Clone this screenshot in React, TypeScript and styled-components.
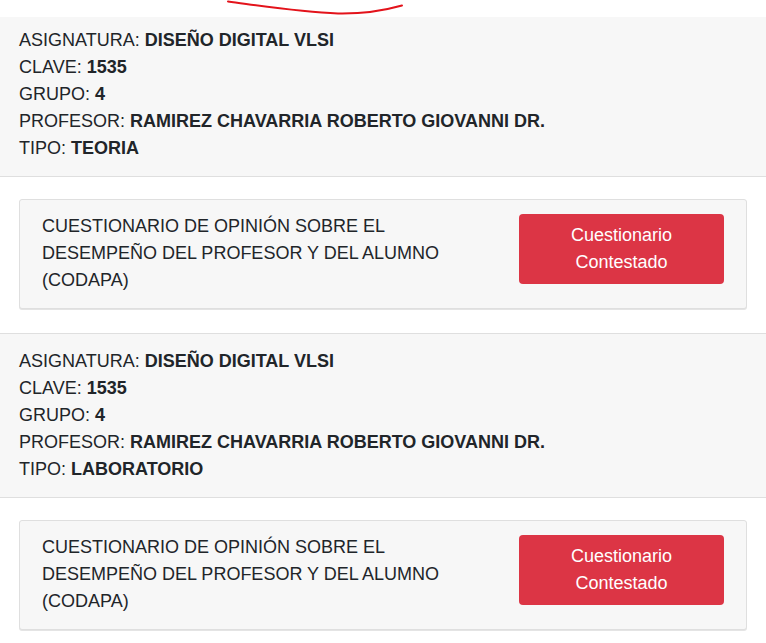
import React from "react";
import styled, { createGlobalStyle } from "styled-components";

const GlobalStyle = createGlobalStyle`
  html, body {
    margin: 0;
    padding: 0;
    background: #ffffff;
  }
  body {
    font-family: "Liberation Sans", Arial, sans-serif;
    color: #212529;
    font-size: 18px;
    line-height: 27px;
  }
`;

const Page = styled.div`
  position: relative;
  padding-top: 17px;
  width: 766px;
`;

const Annotation = styled.svg`
  position: absolute;
  left: 0;
  top: 0;
  pointer-events: none;
`;

const Section = styled.section`
  display: flex;
  flex-direction: column;
`;

const Header = styled.div<{ $first?: boolean }>`
  background: #f7f7f7;
  border-top: ${(p) => (p.$first ? "none" : "1px solid #dfdfdf")};
  border-bottom: 1px solid #dfdfdf;
  padding: ${(p) => (p.$first ? "10px" : "14px")} 19px 14px;
  display: flex;
  flex-direction: column;
`;

const InfoLine = styled.div`
  font-size: 18px;
  line-height: 27px;
  white-space: nowrap;
`;

const Value = styled.b`
  font-weight: 700;
`;

const Body = styled.div`
  padding: 22px 19px 24px;
`;

const Card = styled.div`
  display: flex;
  align-items: flex-start;
  justify-content: space-between;
  background: #f7f7f7;
  border: 1px solid #dfdfdf;
  border-radius: 3px;
  box-shadow: 0 1px 0 #e4e4e4;
  padding: 13px 22px 14px 22px;
`;

const CardText = styled.div`
  flex: 0 0 420px;
  font-size: 18px;
  line-height: 27px;
  color: #212529;
`;

const Button = styled.button`
  flex: 0 0 205px;
  width: 205px;
  margin-top: 1px;
  padding: 8px 12px;
  background: #dc3545;
  color: #ffffff;
  border: none;
  border-radius: 4px;
  font-family: "Liberation Sans", Arial, sans-serif;
  font-size: 18px;
  line-height: 27px;
  text-align: center;
  cursor: pointer;
`;

type Course = {
  asignatura: string;
  clave: string;
  grupo: string;
  profesor: string;
  tipo: string;
};

const courses: Course[] = [
  {
    asignatura: "DISEÑO DIGITAL VLSI",
    clave: "1535",
    grupo: "4",
    profesor: "RAMIREZ CHAVARRIA ROBERTO GIOVANNI DR.",
    tipo: "TEORIA",
  },
  {
    asignatura: "DISEÑO DIGITAL VLSI",
    clave: "1535",
    grupo: "4",
    profesor: "RAMIREZ CHAVARRIA ROBERTO GIOVANNI DR.",
    tipo: "LABORATORIO",
  },
];

export default function App() {
  return (
    <>
      <GlobalStyle />
      <Page>
        <Annotation width="766" height="20" viewBox="0 0 766 20">
          <path
            d="M228 1.5 C 262 6, 300 12, 338 13.5 C 366 14, 386 10, 402 5.5"
            fill="none"
            stroke="#e3131b"
            strokeWidth="2"
            strokeLinecap="round"
          />
        </Annotation>
        {courses.map((c, i) => (
          <Section key={i}>
            <Header $first={i === 0}>
              <InfoLine>
                ASIGNATURA: <Value>{c.asignatura}</Value>
              </InfoLine>
              <InfoLine>
                CLAVE: <Value>{c.clave}</Value>
              </InfoLine>
              <InfoLine>
                GRUPO: <Value>{c.grupo}</Value>
              </InfoLine>
              <InfoLine>
                PROFESOR: <Value>{c.profesor}</Value>
              </InfoLine>
              <InfoLine>
                TIPO: <Value>{c.tipo}</Value>
              </InfoLine>
            </Header>
            <Body>
              <Card>
                <CardText>
                  CUESTIONARIO DE OPINIÓN SOBRE EL DESEMPEÑO DEL PROFESOR Y DEL
                  ALUMNO (CODAPA)
                </CardText>
                <Button type="button">
                  Cuestionario
                  <br />
                  Contestado
                </Button>
              </Card>
            </Body>
          </Section>
        ))}
      </Page>
    </>
  );
}
